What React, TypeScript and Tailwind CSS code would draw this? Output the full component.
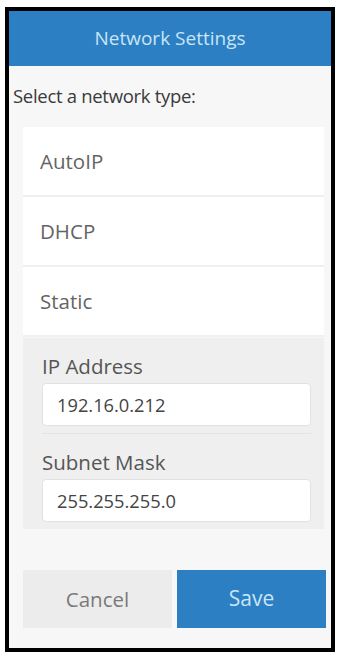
export default function App() {
  const types = ["AutoIP", "DHCP", "Static"]

  return (
    <div className="h-[657px] w-[337px] bg-white pl-[5px] pt-[7px] font-['Open_Sans',sans-serif]">
      <div className="flex h-[645px] w-[330px] flex-col border-4 border-black bg-[#f7f7f7]">
        <div className="flex h-[55px] shrink-0 items-center justify-center bg-[#2b7fc2] text-[19px] text-[#c9e5f8]">
          Network Settings
        </div>

        <p className="mt-[20px] pl-[4px] text-[18.5px] leading-[20px] tracking-[-0.3px] text-[#3a3a3a]">
          Select a network type:
        </p>

        <div className="ml-[14px] mr-[7px] mt-[21px] flex flex-col">
          {types.map((t) => (
            <div
              key={t}
              className="flex h-[70px] items-center border-b-2 border-[#f0f0f0] bg-white pl-[17px] text-[20.5px] text-[#646464]"
            >
              {t}
            </div>
          ))}

          <div className="mt-[1px] flex flex-col bg-[#efefef] pl-[19px] pr-[13px]">
            <Field label="IP Address" value="192.16.0.212" />
            <div className="h-px bg-[#e4e4e4]" />
            <Field label="Subnet Mask" value="255.255.255.0" />
          </div>
        </div>

        <div className="ml-[14px] mr-[5px] mt-[41px] flex gap-[5px]">
          <button className="flex h-[58px] w-[149px] items-center justify-center bg-[#ececec] text-[20.5px] text-[#7a7a7a]">
            Cancel
          </button>
          <button className="flex h-[58px] flex-1 items-center justify-center bg-[#2b7fc2] text-[21px] text-[#c9e5f8]">
            Save
          </button>
        </div>
      </div>
    </div>
  )
}

function Field({ label, value }: { label: string; value: string }) {
  return (
    <div className="flex flex-col pb-[7px] pt-[18px]">
      <span className="text-[20.5px] leading-[20px] text-[#555]">{label}</span>
      <div className="mt-[7px] flex h-[43px] items-center rounded-sm border border-[#e2e2e2] bg-white pl-[14px] text-[18.3px] text-[#444]">
        {value}
      </div>
    </div>
  )
}
